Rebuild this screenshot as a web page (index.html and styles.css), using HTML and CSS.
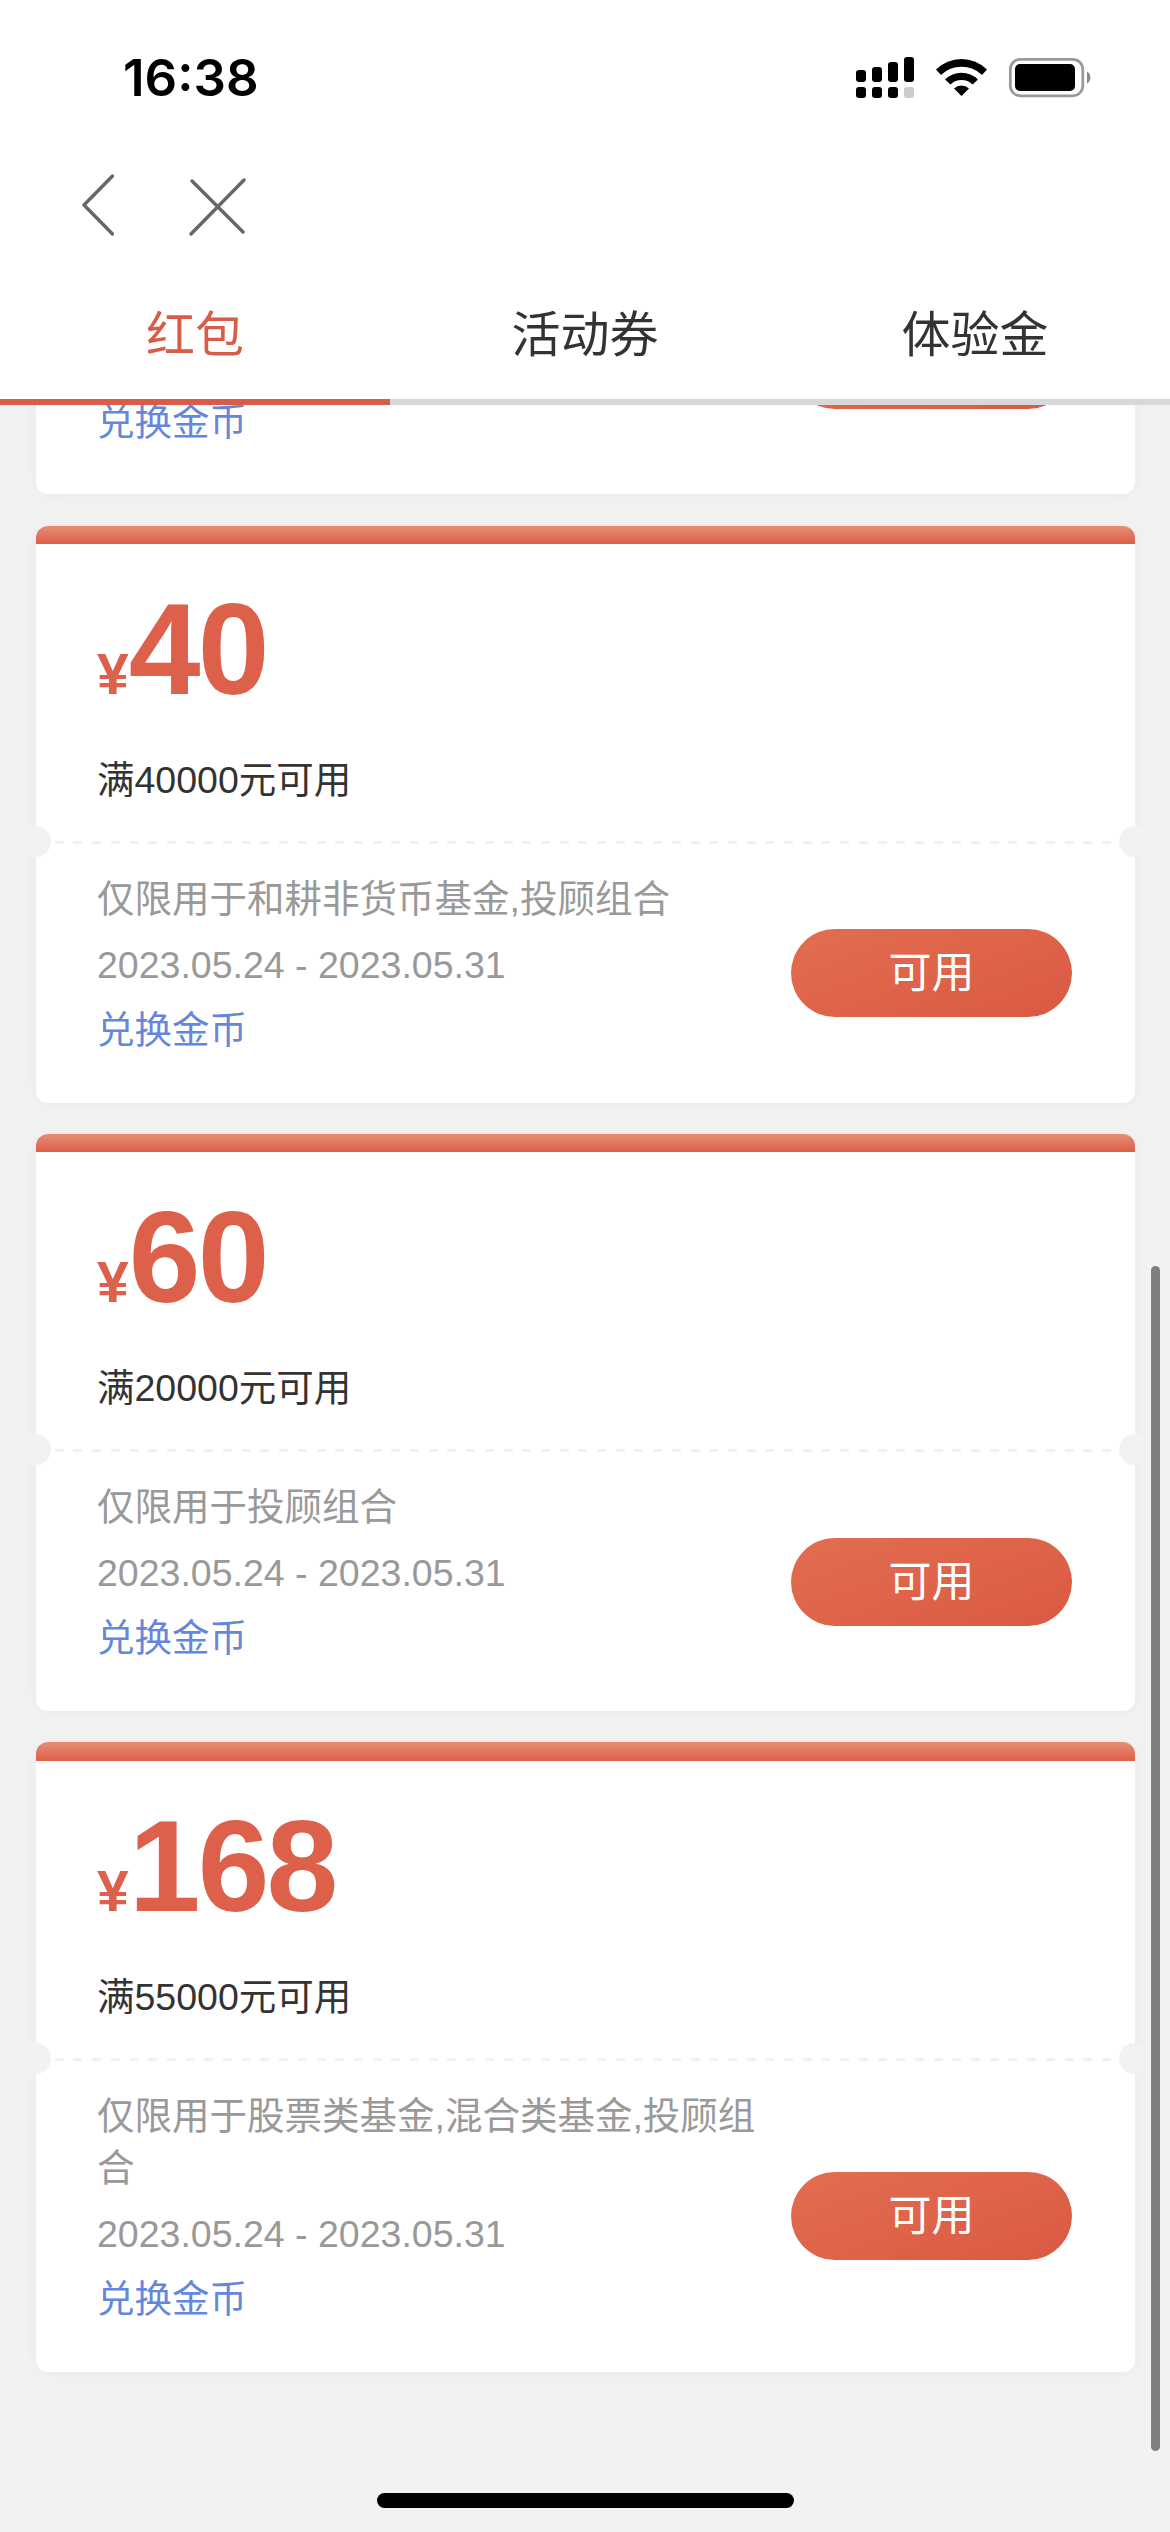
FILE: index.html
```html
<!DOCTYPE html>
<html lang="zh-CN">
<head>
    <meta charset="UTF-8">
    <meta name="viewport" content="width=device-width, initial-scale=1.0">
    <title>红包</title>
    <link rel="stylesheet" href="styles.css">
</head>
<body>
    <!-- Status bar -->
    <div class="status-bar">
        <div class="time">16:38</div>
        <svg class="status-icons" width="240" height="50" viewBox="0 0 240 50">
            <!-- signal -->
            <rect x="4" y="18" width="10" height="12" rx="3"/>
            <rect x="20" y="15" width="10" height="15" rx="3"/>
            <rect x="36" y="10" width="10" height="20" rx="3"/>
            <rect x="52" y="5" width="10" height="25" rx="3"/>
            <rect x="4" y="35" width="10" height="11" rx="3"/>
            <rect x="20" y="35" width="10" height="11" rx="3"/>
            <rect x="36" y="35" width="10" height="11" rx="3"/>
            <rect x="52" y="35" width="10" height="11" rx="3" fill="#cccccc"/>
            <!-- wifi -->
            <path d="M84 17.5 A36.500 36.500 0 0 1 135 17.5 L130 23 A29.500 29.500 0 0 0 89 23 Z"/>
            <path d="M93 27.500 A23.500 23.500 0 0 1 126 27.500 L120.500 32.500 A16 16 0 0 0 98.500 32.500 Z"/>
            <path d="M102 36.500 A11 11 0 0 1 117 36.500 L109.500 44 Z"/>
            <!-- battery -->
            <rect x="158.300" y="7.300" width="72.500" height="36.500" rx="10" fill="none" stroke="#999999" stroke-width="2.700"/>
            <rect x="163" y="12" width="60" height="27" rx="5"/>
            <path d="M235 19.500 a7 7 0 0 1 0 12 Z" fill="#888888"/>
        </svg>
    </div>

    <!-- Nav -->
    <div class="nav">
        <svg width="34" height="64" viewBox="0 0 34 64" class="nav-icon">
            <path d="M32.500 4 L4 33 L32.500 62"/>
        </svg>
        <svg width="60" height="60" viewBox="0 0 60 60" class="nav-icon">
            <path d="M5 5 L56 56 M57 4 L4 58"/>
        </svg>
    </div>

    <!-- Tabs -->
    <div class="tabs">
        <div class="tab active">红包</div>
        <div class="tab">活动券</div>
        <div class="tab">体验金</div>
    </div>

    <!-- Coupon list -->
    <div class="list">
        <div class="card">
            <div class="card-body">
                <div class="info">
                    <a class="exchange">兑换金币</a>
                </div>
                <div class="use-btn"></div>
            </div>
        </div>

        <div class="card">
            <div class="card-bar"></div>
            <div class="card-head">
                <div class="amount"><span class="yen">¥</span>40</div>
                <div class="condition">满40000元可用</div>
            </div>
            <div class="divider"></div>
            <div class="card-body">
                <div class="info">
                    <div>仅限用于和耕非货币基金,投顾组合</div>
                    <div>2023.05.24 - 2023.05.31</div>
                    <a class="exchange">兑换金币</a>
                </div>
                <div class="use-btn">可用</div>
            </div>
        </div>

        <div class="card">
            <div class="card-bar"></div>
            <div class="card-head">
                <div class="amount"><span class="yen">¥</span>60</div>
                <div class="condition">满20000元可用</div>
            </div>
            <div class="divider"></div>
            <div class="card-body">
                <div class="info">
                    <div>仅限用于投顾组合</div>
                    <div>2023.05.24 - 2023.05.31</div>
                    <a class="exchange">兑换金币</a>
                </div>
                <div class="use-btn">可用</div>
            </div>
        </div>

        <div class="card">
            <div class="card-bar"></div>
            <div class="card-head">
                <div class="amount"><span class="yen">¥</span>168</div>
                <div class="condition">满55000元可用</div>
            </div>
            <div class="divider"></div>
            <div class="card-body">
                <div class="info">
                    <div>仅限用于股票类基金,混合类基金,投顾组合</div>
                    <div>2023.05.24 - 2023.05.31</div>
                    <a class="exchange">兑换金币</a>
                </div>
                <div class="use-btn">可用</div>
            </div>
        </div>
    </div>

    <div class="scrollbar"></div>
    <div class="home-indicator"></div>
</body>
</html>
```

FILE: styles.css
```css
* {
    box-sizing: border-box;
}
body {
    margin: 0;
    width: 1170px;
    height: 2532px;
    display: flex;
    flex-direction: column;
    position: relative;
    background: #f2f2f2;
    color: #333333;
    font-family: "Liberation Sans", "Noto Sans CJK SC", sans-serif;
    overflow: hidden;
}

/* Status bar */
.status-bar {
    flex: none;
    height: 141px;
    padding: 47px 76px 0 123px;
    display: flex;
    justify-content: space-between;
    align-items: flex-start;
    background: #ffffff;
}
.time {
    font-family: Inter, sans-serif;
    font-weight: 600;
    font-size: 51px;
    line-height: 62px;
    color: #000000;
}
.status-icons {
    margin: 5px 2px 0 0;
}

/* Nav */
.nav {
    flex: none;
    height: 129px;
    padding: 31px 0 0 80px;
    display: flex;
    align-items: flex-start;
    gap: 73px;
    background: #ffffff;
}
.nav-icon {
    fill: none;
    stroke: #666666;
    stroke-width: 3.4;
    stroke-linecap: round;
    stroke-linejoin: round;
}
.nav-icon + .nav-icon {
    margin-top: 4px;
}

/* Tabs */
.tabs {
    flex: none;
    height: 135px;
    display: grid;
    grid-template-columns: repeat(3, 1fr);
    background: #ffffff;
}
.tab {
    padding-top: 2px;
    border-bottom: 6px solid #d8d8d8;
    text-align: center;
    font-size: 49px;
    line-height: 127px;
}
.tab.active {
    color: #d85c47;
    border-bottom-color: #d85c47;
}

/* Coupon list */
.list {
    flex: 1;
    min-height: 0;
    padding: 0 35.5px 160.5px;
    display: flex;
    flex-direction: column;
    justify-content: flex-end;
    gap: 31.2px;
    overflow: hidden;
}
.card {
    flex: none;
    background: #ffffff;
    border-radius: 12px;
    box-shadow: 0 0 16px rgba(0, 0, 0, 0.04);
}
.card-bar {
    height: 18.5px;
    border-radius: 12px 12px 0 0;
    background: linear-gradient(to bottom, #e88c74, #dc604b);
}
.card-head {
    height: 297px;
    padding: 43px 61.5px 0;
}
.amount {
    font-size: 129px;
    font-weight: bold;
    line-height: 125px;
    letter-spacing: -2.8px;
    color: #dd604a;
}
.yen {
    font-size: 57px;
    line-height: 1;
    letter-spacing: 0;
}
.condition {
    margin-top: 42px;
    font-size: 37.5px;
    line-height: 52.5px;
}

/* Dashed line with a notch at each end */
.divider {
    position: relative;
    height: 3px;
    background: repeating-linear-gradient(to right, #f1f1f1 0, #f1f1f1 9px, transparent 9px, transparent 18.7px);
}
.divider:before,
.divider:after {
    content: '';
    position: absolute;
    top: -15px;
    width: 31px;
    height: 31px;
    border-radius: 50%;
    background: #f2f2f2;
}
.divider:before {
    left: -15.5px;
}
.divider:after {
    right: -15.5px;
}
.card-body {
    min-height: 258.5px;
    padding: 29px 62.5px 46px 61.5px;
    display: flex;
    justify-content: space-between;
    align-items: flex-end;
}
.info {
    width: 660px;
    display: flex;
    flex-direction: column;
    gap: 13px;
    font-size: 37.5px;
    line-height: 52.5px;
    color: #999999;
}
.exchange {
    color: #6487dc;
}
.use-btn {
    flex: none;
    align-self: center;
    width: 281px;
    height: 88px;
    margin-top: 17px;
    border-radius: 44px;
    background: linear-gradient(160deg, #e26e50, #da5943);
    color: #ffffff;
    font-size: 43px;
    line-height: 89px;
    text-align: center;
}

/* Overlays */
.scrollbar {
    position: absolute;
    top: 1266px;
    left: 1151px;
    width: 9px;
    height: 1185px;
    border-radius: 5px;
    background: #7f7f7f;
}
.home-indicator {
    position: absolute;
    bottom: 24px;
    left: 377px;
    width: 417px;
    height: 15px;
    border-radius: 8px;
    background: #000000;
}
```
